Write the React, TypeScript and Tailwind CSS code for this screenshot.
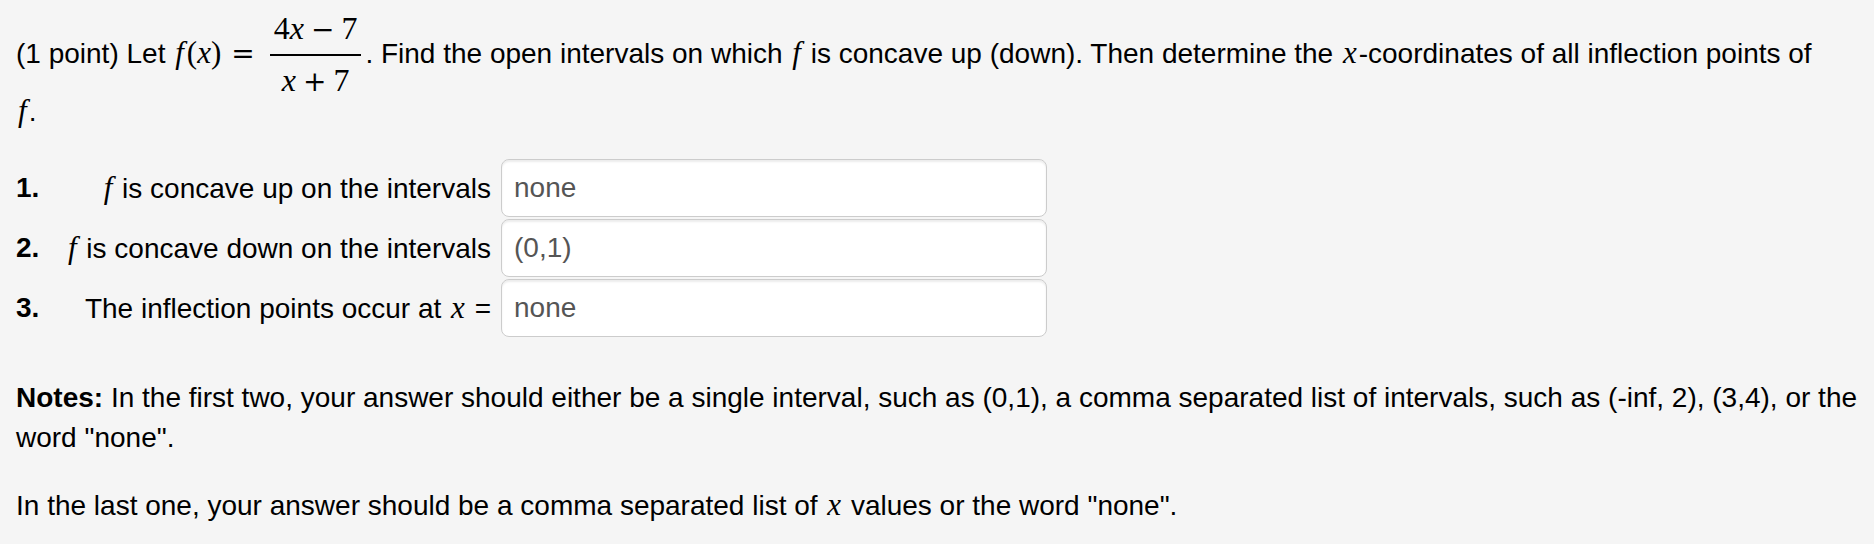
import React from "react";

const serif = "font-['Liberation_Serif','Times_New_Roman',serif]";
const op = "font-['DejaVu_Serif',serif] not-italic";
const mathClass = `${serif} italic text-[31px] mx-[2px]`;
const inputClass = "h-[58px] w-[546px] bg-white border border-[#cccccc] rounded-[8px] px-[12px] text-[28px] text-[#555555] shadow-[inset_0_2px_2px_rgba(0,0,0,0.075)] flex items-center";

function M({ children }: { children: React.ReactNode }) {
  return <span className={mathClass}>{children}</span>;
}

function Fraction() {
  return (
    <span className={`inline-flex flex-col items-center align-middle ml-[15px] mr-[4px] -my-[30px] ${serif} text-[32px] leading-[34px] relative -top-[1px]`}>
      <span className="px-[4px] border-b-[2px] border-black pb-[7px]">
        4<i>x</i><span className={`${op} text-[28px] mx-[7px]`}>−</span>7
      </span>
      <span className="px-[4px] pt-[7px]">
        <i>x</i><span className={`${op} text-[28px] mx-[7px]`}>+</span>7
      </span>
    </span>
  );
}

const rows = [
  { n: "1.", label: <><M>f</M> is concave up on the intervals</>, value: "none" },
  { n: "2.", label: <><M>f</M> is concave down on the intervals</>, value: "(0,1)" },
  { n: "3.", label: <>The inflection points occur at <M>x</M> =</>, value: "none" },
];

export default function App() {
  return (
    <div className="min-h-screen bg-[#f5f5f5] px-[16px] pt-[24px] text-[28px] leading-[40px] text-black font-['Liberation_Sans',Arial,sans-serif]">
      <p className="leading-[57px]">
        (1 point) Let <span className={`${serif} italic text-[31px] ml-[2px] mr-[3px]`}>f</span><span className={`${serif} text-[31px]`}>(</span><span className={`${serif} italic text-[31px]`}>x</span><span className={`${serif} text-[31px]`}>)</span>
        <span className={`${op} text-[28px] ml-[10px]`}>=</span>
        <Fraction />. Find the open intervals on which <M>f</M> is concave up (down). Then determine the <M>x</M>-coordinates of all inflection points of
        <br />
        <M>f</M>.
      </p>

      <div className="mt-[19px] grid grid-cols-[39px_446px_546px] items-center gap-y-[2px]">
        {rows.map(r => (
          <React.Fragment key={r.n}>
            <span className="font-bold">{r.n}</span>
            <span className="text-right pr-[10px] whitespace-nowrap">{r.label}</span>
            <div className={inputClass}>{r.value}</div>
          </React.Fragment>
        ))}
      </div>

      <p className="mt-[41px]">
        <b>Notes:</b> In the first two, your answer should either be a single interval, such as (0,1), a comma separated list of intervals, such as (-inf, 2), (3,4), or the word "none".
      </p>
      <p className="mt-[27px]">
        In the last one, your answer should be a comma separated list of <M>x</M> values or the word "none".
      </p>
    </div>
  );
}
